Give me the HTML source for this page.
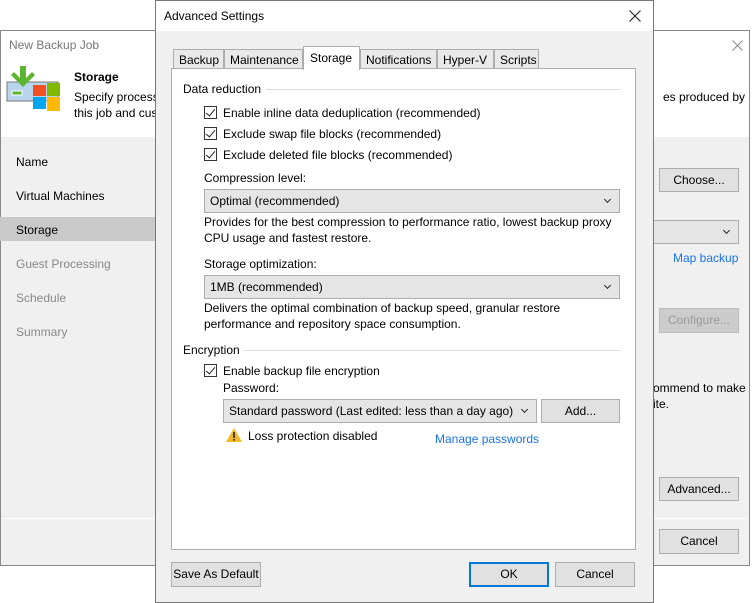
<!DOCTYPE html>
<html><head><style>
*{box-sizing:border-box;margin:0;padding:0}
body{width:754px;height:603px;background:#fff;font-family:"Liberation Sans",sans-serif;font-size:12px;color:#000;position:relative;overflow:hidden}
.a{position:absolute;white-space:nowrap}
.btn{position:absolute;background:#e1e1e1;border:1px solid #adadad;text-align:center;line-height:22px}
.cb{position:absolute;width:13px;height:13px;border:1px solid #333;background:#fff}
.cb:after{content:"";position:absolute;left:3px;top:0px;width:4px;height:8px;border:solid #222;border-width:0 1.5px 1.5px 0;transform:rotate(40deg)}
.sel{position:absolute;background:#e5e5e5;border:1px solid #adadad;line-height:22px;padding-left:5px}
.chev{position:absolute;right:9px;top:7px;width:5px;height:5px;border:solid #222;border-width:0 1.5px 1.5px 0;transform:rotate(45deg)}
.link{color:#1a73e8}
</style></head><body>
<!-- background window -->
<div class="a" style="left:0;top:30px;width:750px;height:536px;border:1px solid #888;background:#f0f0f0"></div>
<div class="a" style="left:1px;top:31px;width:748px;height:106px;background:#fff"></div>
<div class="a" style="left:9px;top:38px;color:#777;font-size:12px">New Backup Job</div>
<svg class="a" style="left:732px;top:40px" width="11" height="11"><path d="M0.5 0.5L10.5 10.5M10.5 0.5L0.5 10.5" stroke="#888" stroke-width="1"/></svg>
<svg class="a" style="left:6px;top:66px" width="54" height="54" viewBox="0 0 54 54">
<rect x="1" y="16" width="51" height="19" fill="#b9d5ee" stroke="#777"/>
<rect x="6" y="25" width="10" height="4" fill="#5cb531" stroke="#fff"/>
<polygon points="14,0 20,0 20,12 26,6 29,9 17,21 5,9 8,6 14,12" fill="#5cb531"/>
<rect x="27" y="19" width="13" height="11" fill="#f25022"/>
<rect x="41" y="17" width="13" height="13" fill="#7fba00"/>
<rect x="27" y="31" width="13" height="12" fill="#00a4ef"/>
<rect x="41" y="31" width="13" height="14" fill="#ffb900"/>
</svg>
<div class="a" style="left:74px;top:70px;font-weight:bold">Storage</div>
<div class="a" style="left:74px;top:90px">Specify process</div>
<div class="a" style="left:74px;top:106px">this job and cus</div>
<div class="a" style="left:663px;top:90px">es produced by</div>
<div class="a" style="left:0;top:217px;width:156px;height:24px;background:#c9c9c9"></div>
<div class="a" style="left:16px;top:155px">Name</div>
<div class="a" style="left:16px;top:189px">Virtual Machines</div>
<div class="a" style="left:16px;top:223px">Storage</div>
<div class="a" style="left:16px;top:257px;color:#888">Guest Processing</div>
<div class="a" style="left:16px;top:291px;color:#888">Schedule</div>
<div class="a" style="left:16px;top:325px;color:#888">Summary</div>
<div class="a" style="left:640px;top:168px;width:14px;height:23px;border:1px solid #adadad;background:#fff"></div>
<div class="btn" style="left:659px;top:168px;width:80px;height:24px">Choose...</div>
<div class="sel" style="left:645px;top:220px;width:94px;height:24px"><span class="chev"></span></div>
<div class="a link" style="left:673px;top:251px">Map backup</div>
<div class="btn" style="left:659px;top:308px;width:80px;height:25px;color:#999;background:#ccc;border-color:#bbb">Configure...</div>
<div class="a" style="left:653px;top:381px">ommend to make</div>
<div class="a" style="left:653px;top:397px">ite.</div>
<div class="btn" style="left:659px;top:477px;width:80px;height:24px">Advanced...</div>
<div class="a" style="left:1px;top:518px;width:748px;height:1px;background:#fff"></div>
<div class="btn" style="left:640px;top:529px;width:14px;height:25px"></div>
<div class="btn" style="left:659px;top:529px;width:80px;height:25px">Cancel</div>

<!-- dialog -->
<div class="a" style="left:155px;top:0;width:499px;height:603px;border:1px solid #777;background:#f0f0f0"></div>
<div class="a" style="left:156px;top:1px;width:497px;height:30px;background:#fff"></div>
<div class="a" style="left:164px;top:9px">Advanced Settings</div>
<svg class="a" style="left:629px;top:10px" width="12" height="12"><path d="M0.5 0.5L11.5 11.5M11.5 0.5L0.5 11.5" stroke="#222" stroke-width="1.1"/></svg>
<!-- tabs -->
<div class="a" style="left:171px;top:48px;width:464px;height:21px">
<div class="a" style="left:2px;top:1px;width:51px;height:20px;border:1px solid #adadad;background:#e9e9e9;padding:3px 0 0 5px">Backup</div>
<div class="a" style="left:53px;top:1px;width:79px;height:20px;border:1px solid #adadad;background:#e9e9e9;padding:3px 0 0 5px">Maintenance</div>
<div class="a" style="left:132px;top:-2px;width:57px;height:24px;border:1px solid #adadad;border-bottom:none;background:#fff;padding:4px 0 0 6px;z-index:2">Storage</div>
<div class="a" style="left:189px;top:1px;width:77px;height:20px;border:1px solid #adadad;background:#e9e9e9;padding:3px 0 0 5px">Notifications</div>
<div class="a" style="left:266px;top:1px;width:57px;height:20px;border:1px solid #adadad;background:#e9e9e9;padding:3px 0 0 5px">Hyper-V</div>
<div class="a" style="left:323px;top:1px;width:45px;height:20px;border:1px solid #adadad;background:#e9e9e9;padding:3px 0 0 5px">Scripts</div>
</div>
<div class="a" style="left:171px;top:68px;width:465px;height:482px;border:1px solid #adadad;background:#fff"></div>
<div class="a" style="left:183px;top:82px">Data reduction</div>
<div class="a" style="left:266px;top:89px;width:355px;height:1px;background:#ddd"></div>
<div class="cb" style="left:204px;top:106px"></div><div class="a" style="left:223px;top:106px">Enable inline data deduplication (recommended)</div>
<div class="cb" style="left:204px;top:127px"></div><div class="a" style="left:223px;top:127px">Exclude swap file blocks (recommended)</div>
<div class="cb" style="left:204px;top:148px"></div><div class="a" style="left:223px;top:148px">Exclude deleted file blocks (recommended)</div>
<div class="a" style="left:204px;top:171px">Compression level:</div>
<div class="sel" style="left:204px;top:189px;width:416px;height:24px">Optimal (recommended)<span class="chev"></span></div>
<div class="a" style="left:204px;top:215px">Provides for the best compression to performance ratio, lowest backup proxy</div>
<div class="a" style="left:204px;top:231px">CPU usage and fastest restore.</div>
<div class="a" style="left:204px;top:257px">Storage optimization:</div>
<div class="sel" style="left:204px;top:275px;width:416px;height:24px">1MB (recommended)<span class="chev"></span></div>
<div class="a" style="left:204px;top:301px">Delivers the optimal combination of backup speed, granular restore</div>
<div class="a" style="left:204px;top:317px">performance and repository space consumption.</div>
<div class="a" style="left:183px;top:343px">Encryption</div>
<div class="a" style="left:243px;top:350px;width:378px;height:1px;background:#ddd"></div>
<div class="cb" style="left:204px;top:364px"></div><div class="a" style="left:223px;top:364px">Enable backup file encryption</div>
<div class="a" style="left:223px;top:381px">Password:</div>
<div class="sel" style="left:223px;top:399px;width:314px;height:24px">Standard password (Last edited: less than a day ago)<span class="chev"></span></div>
<div class="btn" style="left:541px;top:399px;width:79px;height:24px">Add...</div>
<svg class="a" style="left:226px;top:428px" width="16" height="14"><polygon points="8,0 16,14 0,14" fill="#f3b824"/><rect x="7.2" y="4" width="1.6" height="6" fill="#222"/><rect x="7.2" y="11" width="1.6" height="1.6" fill="#222"/></svg>
<div class="a" style="left:248px;top:429px">Loss protection disabled</div>
<div class="a link" style="left:435px;top:432px">Manage passwords</div>
<div class="btn" style="left:171px;top:562px;width:90px;height:25px">Save As Default</div>
<div class="btn" style="left:469px;top:562px;width:80px;height:25px;border:2px solid #0078d7;line-height:21px">OK</div>
<div class="btn" style="left:555px;top:562px;width:80px;height:25px">Cancel</div>
</body></html>
